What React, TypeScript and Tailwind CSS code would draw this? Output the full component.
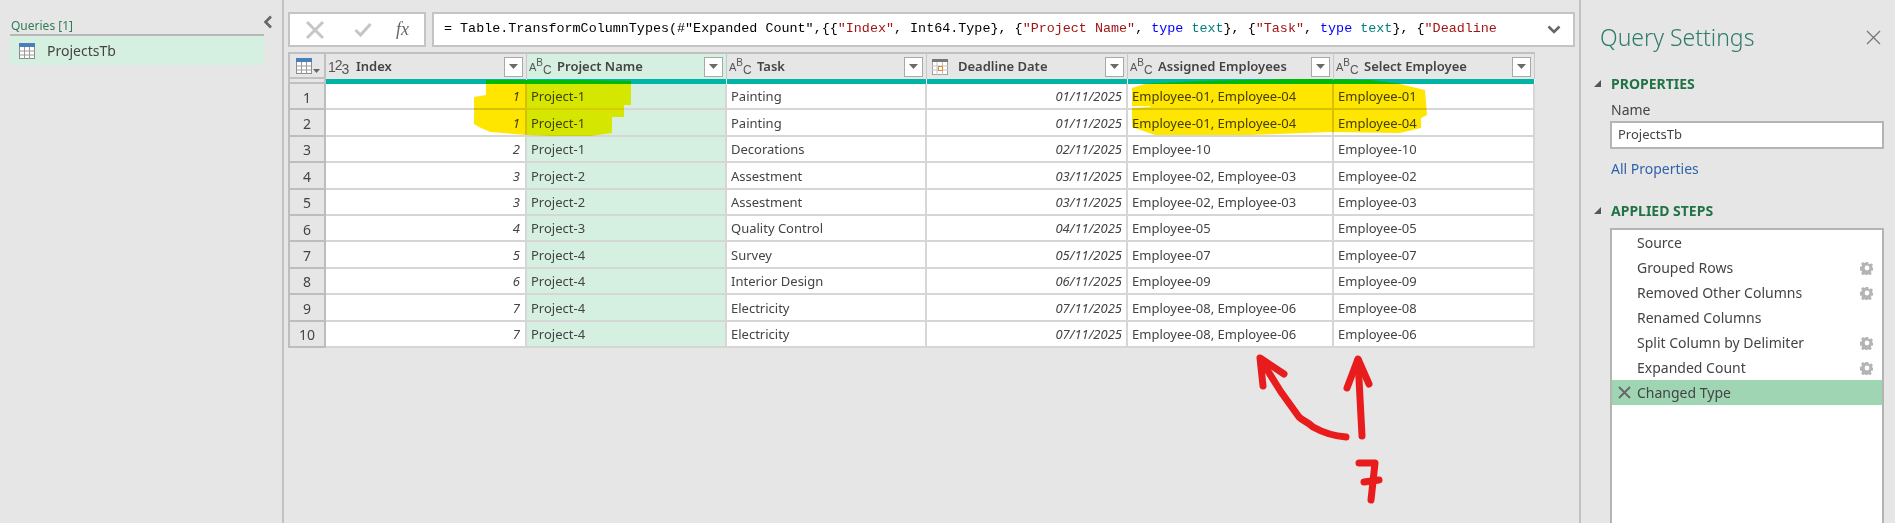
const rows = [
  [1, "Project-1", "Painting", "01/11/2025", "Employee-01, Employee-04", "Employee-01"],
  [1, "Project-1", "Painting", "01/11/2025", "Employee-01, Employee-04", "Employee-04"],
  [2, "Project-1", "Decorations", "02/11/2025", "Employee-10", "Employee-10"],
  [3, "Project-2", "Assestment", "03/11/2025", "Employee-02, Employee-03", "Employee-02"],
  [3, "Project-2", "Assestment", "03/11/2025", "Employee-02, Employee-03", "Employee-03"],
  [4, "Project-3", "Quality Control", "04/11/2025", "Employee-05", "Employee-05"],
  [5, "Project-4", "Survey", "05/11/2025", "Employee-07", "Employee-07"],
  [6, "Project-4", "Interior Design", "06/11/2025", "Employee-09", "Employee-09"],
  [7, "Project-4", "Electricity", "07/11/2025", "Employee-08, Employee-06", "Employee-08"],
  [7, "Project-4", "Electricity", "07/11/2025", "Employee-08, Employee-06", "Employee-06"],
];
const steps: [string, boolean][] = [
  ["Source", false],
  ["Grouped Rows", true],
  ["Removed Other Columns", true],
  ["Renamed Columns", false],
  ["Split Column by Delimiter", true],
  ["Expanded Count", true],
];

function TableIcon({ className }: { className?: string }) {
  return (
    <svg width="16" height="16" viewBox="0 0 16 16" className={className}>
      <rect x="0.5" y="0.5" width="15" height="15" fill="#fff" stroke="#8a8a8a" />
      <rect x="0" y="0" width="16" height="4" fill="#4d7ebc" />
      <path d="M0 8h16M0 12h16M5.5 4v12M10.5 4v12" stroke="#9a9a9a" strokeWidth="1" />
    </svg>
  );
}
function Drop() {
  return (
    <div className="w-[19px] h-[20px] shrink-0 bg-white border border-[#a9a9a9] flex items-center justify-center">
      <svg width="9" height="5" viewBox="0 0 9 5"><path d="M0 0h9L4.5 5z" fill="#6a6a6a" /></svg>
    </div>
  );
}
function Abc() {
  return (
    <span className="flex w-[20px] h-[18px] shrink-0 text-[#555] font-['Liberation_Sans',sans-serif]">
      <span className="self-center text-[11px] leading-[11px] mt-[2px]">A</span>
      <span className="self-start text-[10px] leading-[10px]">B</span>
      <span className="self-end text-[12px] leading-[12px]">C</span>
    </span>
  );
}
function Num() {
  return (
    <span className="flex w-[20px] h-[18px] shrink-0 text-[14px] leading-[14px] text-[#555] font-['Liberation_Sans',sans-serif]">
      <span className="self-center">1</span>
      <span className="self-start -ml-px">2</span>
      <span className="self-end -ml-px">3</span>
    </span>
  );
}
function Cal() {
  return (
    <svg width="16" height="16" viewBox="0 0 16 16" className="shrink-0 ml-[3px] mr-[2px]">
      <rect x="0.5" y="0.5" width="15" height="15" fill="#fff" stroke="#a0a0a0" />
      <rect x="0" y="0" width="16" height="3" fill="#777" />
      <path d="M0 7h16M0 11h16M5 3v13M10.5 3v13" stroke="#c4c4c4" />
      <rect x="6.5" y="7.5" width="4" height="4" fill="#fff" stroke="#e08a2c" />
    </svg>
  );
}
function Gear() {
  return (
    <svg width="14" height="14" viewBox="0 0 14 14" className="shrink-0">
      <path d="M5.6 0h2.8l.4 2 1.3.6 1.8-1.1 2 2-1.1 1.8.6 1.3 2 .4v0H14v2.8l-2 .4-.6 1.3 1.1 1.8-2 2-1.8-1.1-1.3.6-.4 2H5.6l-.4-2-1.3-.6-1.8 1.1-2-2 1.1-1.8-.6-1.3-2-.4V5.6l2-.4.6-1.3L.1 2.1l2-2 1.8 1.1 1.3-.6z" fill="#b4b4b4" transform="translate(1 1) scale(.86)" />
      <circle cx="7" cy="7" r="2.4" fill="#fff" />
    </svg>
  );
}
function Head({ icon, label, active }: { icon: React.ReactNode; label: string; active?: boolean }) {
  return (
    <div className={`flex items-center pl-[2px] pr-[3px] border-r border-[#c8c8c8] border-t-2 border-t-[#c0c0c0] ${active ? "bg-[#d5f0e0]" : "bg-[#e6e6e6]"}`}>
      {icon}
      <span className="ml-[8px] flex-1 text-[13px] font-semibold text-[#444] whitespace-nowrap">{label}</span>
      <Drop />
    </div>
  );
}

export default function App() {
  const cell = "flex items-center pt-[2px] border-b-2 border-r-2 border-[#d6d6d6] text-[13px] text-[#444] whitespace-nowrap overflow-hidden";
  return (
    <div className="relative w-[1895px] h-[523px] overflow-hidden flex bg-[#e6e6e6] font-['Noto_Sans','Open_Sans',sans-serif]">
      {/* Queries pane */}
      <aside className="w-[284px] shrink-0 border-r-2 border-[#c2c2c2] pt-[17px] pl-[10px] pr-[18px]">
        <div className="flex items-start justify-between">
          <span className="text-[12px] leading-[17px] ml-px text-[#2e7d55]">Queries [1]</span>
          <svg width="10" height="14" viewBox="0 0 10 14" className="-mt-[2px] -mr-[9px]">
            <path d="M8 1.5 2.5 7 8 12.5" fill="none" stroke="#666" strokeWidth="2.6" />
          </svg>
        </div>
        <div className="h-[31px] border-t-2 border-[#b8b8b8] bg-[#d5f0e0] flex items-center pl-[9px]">
          <TableIcon />
          <span className="ml-[12px] text-[14px] text-[#444]">ProjectsTb</span>
        </div>
      </aside>

      {/* Center */}
      <main className="w-[1297px] shrink-0 border-r-2 border-[#c2c2c2] pl-[4px] pr-[4px] pt-[12px]">
        <div className="flex h-[35px] gap-[6px]">
          <div className="w-[138px] bg-white border-2 border-[#c4c4c4] flex items-center pl-[15px]">
            <svg width="20" height="20" viewBox="0 0 20 20"><path d="M2 2l16 16M18 2 2 18" stroke="#c6c6c6" strokeWidth="3" /></svg>
            <svg width="18" height="16" viewBox="0 0 18 16" className="ml-[29px]"><path d="M1.5 8l5 5L16.5 2" fill="none" stroke="#c6c6c6" strokeWidth="3" /></svg>
            <span className="ml-[24px] font-['Liberation_Serif',serif] italic text-[18px] text-[#666]">fx</span>
          </div>
          <div className="flex-1 min-w-0 bg-white border-2 border-[#c4c4c4] flex items-center pl-[10px] pr-[12px] font-['Liberation_Mono',monospace] text-[13.4px] text-black whitespace-pre">
            <span className="flex-1 overflow-hidden">
              = Table.TransformColumnTypes(#"Expanded Count",{"{{"}<span className="text-[#a31515]">"Index"</span>, Int64.Type{"}"}, {"{"}<span className="text-[#a31515]">"Project Name"</span>, <span className="text-[#0000ff]">type</span> <span className="text-[#00807f]">text</span>{"}"}, {"{"}<span className="text-[#a31515]">"Task"</span>, <span className="text-[#0000ff]">type</span> <span className="text-[#00807f]">text</span>{"}"}, {"{"}<span className="text-[#a31515]">"Deadline</span>
            </span>
            <svg width="14" height="9" viewBox="0 0 14 9" className="shrink-0"><path d="M1.5 1.5 7 7l5.5-5.5" fill="none" stroke="#666" strokeWidth="2.6" /></svg>
          </div>
        </div>
        <div className="mt-[5px] w-[1247px] grid grid-cols-[38px_201px_200px_200px_201px_206px_201px] grid-rows-[27px_5px_repeat(10,26.4px)]">
          <div className="bg-[#e6e6e6] border-2 border-[#c0c0c0] flex items-center pl-[6px]">
            <TableIcon />
            <svg width="7" height="4" viewBox="0 0 7 4" className="mt-[10px] ml-[1px]"><path d="M0 0h7L3.5 4z" fill="#666" /></svg>
          </div>
          <Head icon={<Num />} label="Index" />
          <Head icon={<Abc />} label="Project Name" active />
          <Head icon={<Abc />} label="Task" />
          <Head icon={<Cal />} label="Deadline Date" />
          <Head icon={<Abc />} label="Assigned Employees" />
          <Head icon={<Abc />} label="Select Employee" />

          <div className="bg-[#e6e6e6] border-l-2 border-r-2 border-b-2 border-[#c0c0c0]" />
          {[0, 1, 2, 3, 4, 5].map((i) => (
            <div key={i} className="bg-[#00b4a6] border-r border-white" />
          ))}

          {rows.map((r, i) => (
            <div key={i} className="contents">
              <div className="bg-[#e6e6e6] pt-[2px] border-l-2 border-r-2 border-b-2 border-[#bdbdbd] flex items-center justify-center text-[14px] text-[#444]">
                {i + 1}
              </div>
              <div className={`${cell} bg-white justify-end italic pr-[5px]`}>{r[0]}</div>
              <div className={`${cell} bg-[#d5f0e0] pl-[4px]`}>{r[1]}</div>
              <div className={`${cell} bg-white pl-[4px]`}>{r[2]}</div>
              <div className={`${cell} bg-white justify-end italic pr-[4px]`}>{r[3]}</div>
              <div className={`${cell} bg-white pl-[4px]`}>{r[4]}</div>
              <div className={`${cell} bg-white pl-[4px]`}>{r[5]}</div>
            </div>
          ))}
        </div>
      </main>

      {/* Query settings */}
      <aside className="flex-1 min-w-0 pl-[13px] pr-[11px] pt-[20px] text-[#444]">
        <div className="flex items-center justify-between h-[34px] pl-[6px]">
          <span className="text-[23px] font-light text-[#2e7d6b] leading-[34px]">Query Settings</span>
          <svg width="15" height="15" viewBox="0 0 15 15" className="mr-[3px]"><path d="M1 1l13 13M14 1 1 14" stroke="#777" strokeWidth="1.3" /></svg>
        </div>
        <div className="mt-[19px] flex items-center h-[20px]">
          <svg width="7" height="7" viewBox="0 0 7 7"><path d="M7 0v7H0z" fill="#555" /></svg>
          <span className="ml-[10px] text-[14px] font-bold text-[#217346]">PROPERTIES</span>
        </div>
        <div className="pl-[16px]">
          <div className="mt-[8px] pl-px text-[14px] leading-[18px]">Name</div>
          <div className="mt-[2px] h-[28px] bg-white border-2 border-[#b4b4b4] flex items-center pl-[6px] text-[13px]">ProjectsTb</div>
          <div className="mt-[11px] pl-px text-[14px] leading-[18px] text-[#2f62ab]">All Properties</div>
        </div>
        <div className="mt-[22px] flex items-center h-[20px]">
          <svg width="7" height="7" viewBox="0 0 7 7"><path d="M7 0v7H0z" fill="#555" /></svg>
          <span className="ml-[10px] text-[14px] font-bold text-[#217346]">APPLIED STEPS</span>
        </div>
        <div className="ml-[16px] mt-[8px] h-[320px] bg-white border-2 border-[#b4b4b4]">
          {steps.map(([s, g]) => (
            <div key={s} className="h-[25px] flex items-center pl-[25px] pr-[8px] text-[14px]">
              <span className="flex-1 whitespace-nowrap">{s}</span>
              {g && <Gear />}
            </div>
          ))}
          <div className="h-[25px] flex items-center bg-[#9fd5b3] pl-[6px] text-[14px]">
            <svg width="13" height="13" viewBox="0 0 13 13"><path d="M1 1l11 11M12 1 1 12" stroke="#666" strokeWidth="1.8" /></svg>
            <span className="ml-[6px]">Changed Type</span>
          </div>
        </div>
      </aside>

      {/* Hand-drawn annotations */}
      <svg width="1895" height="523" viewBox="0 0 1895 523" className="absolute inset-0 pointer-events-none mix-blend-multiply">
        <path d="M486 80 L527 80 L527 135 L490 132 L479 127 L474 124 L474 97 L486 95 Z" fill="#ffe600" />
        <path d="M527 80 L580 81 L631 81 L631 105 L624 105 L624 117 L612 117 L612 133 L590 136 L550 136 L527 135 Z" fill="#fff500" />
        <path d="M1132 88 L1145 84 L1300 79 L1360 80 L1400 84 L1425 90 L1427 115 L1421 118 L1421 128 L1400 133 L1330 132 L1250 135 L1155 135 L1132 127 L1132 108 L1150 107 L1150 106 L1132 106 Z" fill="#ffe600" />
      </svg>
      <svg width="1895" height="523" viewBox="0 0 1895 523" className="absolute inset-0 pointer-events-none">
        <path d="M486 80 H580 L631 81 V84 H486 Z" fill="#00b900" />
        <path d="M1140 84 L1200 81 L1300 79 L1370 80 L1400 84 Z" fill="#00b900" />
        <g fill="none" stroke="#e81c1c" strokeWidth="7" strokeLinecap="round" strokeLinejoin="round">
          <path d="M1346 437 C1332 436 1322 432 1313 427 C1308 422 1303 421 1299 417 L1281 392 L1261 360" />
          <path d="M1263 386 L1260 358 L1284 374" />
          <path d="M1362 436 L1358 360" />
          <path d="M1347 388 L1358 359 L1369 384" />
          <path d="M1359 463 L1375 463 L1371 500" />
          <path d="M1364 482 L1379 480" />
        </g>
      </svg>
    </div>
  );
}
